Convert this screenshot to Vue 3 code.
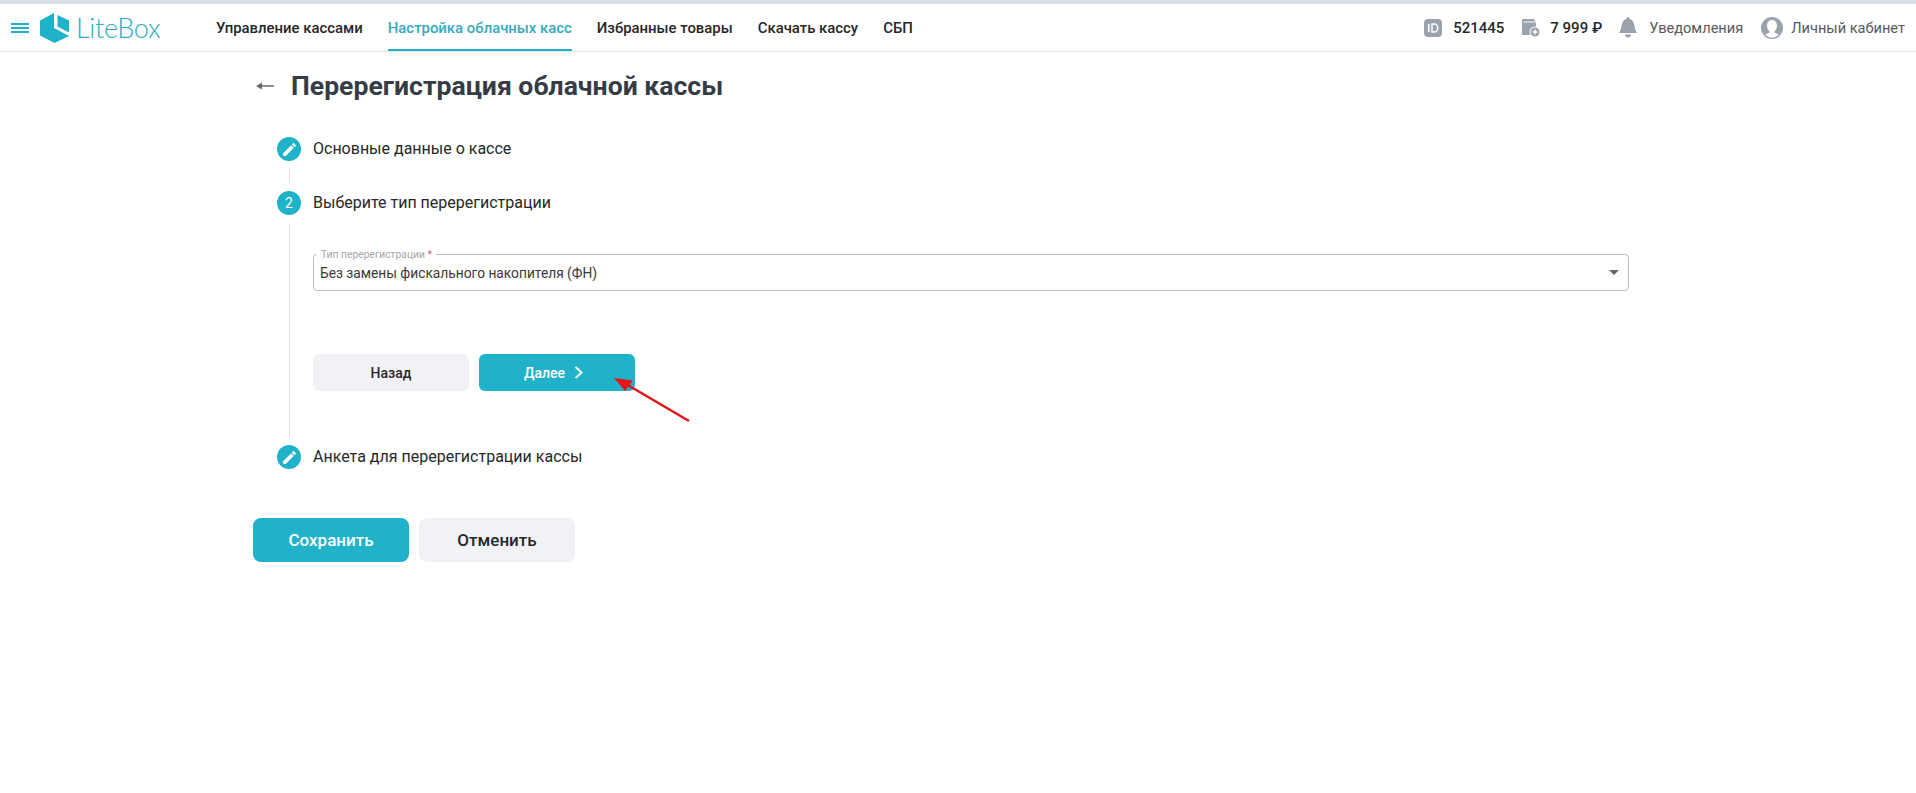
<script setup>
const nav = [
  { label: 'Управление кассами' },
  { label: 'Настройка облачных касс', active: true },
  { label: 'Избранные товары' },
  { label: 'Скачать кассу' },
  { label: 'СБП' },
]
</script>

<template>
  <div class="page">
    <header class="header">
      <button class="burger" aria-label="Меню"><span></span><span></span><span></span></button>
      <div class="logo">
        <svg class="logo-mark" width="29" height="30" viewBox="0 0 29 30">
          <path fill="#20b2c8" d="M14 0 V15 L29 23 L14.500 30 L0 22.500 V7.500 Z"/>
          <path fill="#20b2c8" d="M17.500 2 L29 7.500 V19.500 L17.500 13.500 Z"/>
        </svg>
        <span class="logo-text">LiteBox</span>
      </div>
      <nav class="nav">
        <a v-for="item in nav" :key="item.label" class="nav-item" :class="{ active: item.active }">{{ item.label }}</a>
      </nav>
      <div class="tools">
        <svg class="tool-icon id" width="18" height="18" viewBox="0 0 18 18">
          <rect width="18" height="18" rx="4" fill="#9aa3ad"/>
          <rect x="4" y="5" width="1.600" height="8" fill="#fff"/>
          <path d="M8 5h2.500a3.200 4 0 0 1 0 8H8z" fill="none" stroke="#fff" stroke-width="1.500"/>
        </svg>
        <b class="num id-num">521445</b>
        <svg class="tool-icon wallet" width="19" height="19" viewBox="0 0 19 19">
          <path fill="#9aa3ad" d="M2 1h11l1.500 2.500H2.500v1H15V17H2a1 1 0 0 1-1-1V2a1 1 0 0 1 1-1z"/>
          <circle cx="14" cy="14" r="5.500" fill="#fff"/>
          <circle cx="14" cy="14" r="4.500" fill="#9aa3ad"/>
          <path d="M14 11.500v5M11.500 14h5" stroke="#fff" stroke-width="1.300"/>
        </svg>
        <b class="num money">7 999 ₽</b>
        <svg class="tool-icon bell" width="18" height="22" viewBox="0 0 18 22">
          <path fill="#9aa3ad" d="M9 0c1 0 1.600.8 1.500 1.800C13.500 2.600 15 5.500 15.500 9c.3 2.500 1 4.500 2.500 7H0c1.500-2.500 2.200-4.500 2.500-7C3 5.500 4.500 2.600 7.500 1.800 7.400.8 8 0 9 0zM6 17.500h6a3 3 0 0 1-6 0z"/>
        </svg>
        <span class="link notify">Уведомления</span>
        <svg class="tool-icon avatar" width="22" height="22" viewBox="0 0 22 22">
          <circle cx="11" cy="11" r="11" fill="#9aa3ad"/>
          <path fill="#fff" d="M11 3c3.200 0 5 2.500 5 5.800 0 2.400-1 4.400-2.500 5.500v1.200c1.500.7 3 1.200 4.300 2.100A9 9 0 0 1 4.200 17.600c1.300-.9 2.800-1.400 4.300-2.100v-1.200C7 13.200 6 11.200 6 8.800 6 5.500 7.800 3 11 3z"/>
        </svg>
        <span class="link">Личный кабинет</span>
      </div>
    </header>

    <main class="main">
      <div class="title-row">
        <svg class="back" width="18" height="10" viewBox="0 0 18 10">
          <path d="M18 5H3" stroke="#666" stroke-width="1.500"/>
          <path d="M0 5 6 1.500v7z" fill="#666"/>
        </svg>
        <h1 class="title">Перерегистрация облачной кассы</h1>
      </div>

      <div class="steps">
        <div class="step">
          <span class="badge">
            <svg width="17" height="17" viewBox="0 0 24 24"><path fill="#fff" d="M3 17.250V21h3.750L17.810 9.940l-3.750-3.750L3 17.250zM20.710 7.040a1 1 0 0 0 0-1.410l-2.340-2.340a1 1 0 0 0-1.410 0l-1.830 1.830 3.750 3.750 1.830-1.830z"/></svg>
          </span>
          <span class="step-label">Основные данные о кассе</span>
        </div>
        <div class="connector short"></div>
        <div class="step">
          <span class="badge">2</span>
          <span class="step-label">Выберите тип перерегистрации</span>
        </div>
        <div class="step-body">
          <div class="select">
            <span class="select-legend">Тип перерегистрации <i>*</i></span>
            <span class="select-value">Без замены фискального накопителя (ФН)</span>
            <span class="select-arrow"></span>
          </div>
          <div class="step-actions">
            <button class="btn small ghost">Назад</button>
            <button class="btn small primary">
              Далее
              <svg class="chev" width="10" height="13" viewBox="0 0 10 13"><path d="M1.500 1 7.500 6.500 1.500 12" fill="none" stroke="#fff" stroke-width="1.900"/></svg>
            </button>
            <svg class="annotation" width="90" height="60" viewBox="0 0 90 60">
              <path d="M81 48 18 11" stroke="#e8141c" stroke-width="2.600" fill="none"/>
              <path d="M6 5 25 7.500 17 18z" fill="#e8141c"/>
            </svg>
          </div>
        </div>
        <div class="step">
          <span class="badge">
            <svg width="17" height="17" viewBox="0 0 24 24"><path fill="#fff" d="M3 17.250V21h3.750L17.810 9.940l-3.750-3.750L3 17.250zM20.710 7.040a1 1 0 0 0 0-1.410l-2.340-2.340a1 1 0 0 0-1.410 0l-1.830 1.830 3.750 3.750 1.830-1.830z"/></svg>
          </span>
          <span class="step-label">Анкета для перерегистрации кассы</span>
        </div>
      </div>

      <div class="actions">
        <button class="btn large primary">Сохранить</button>
        <button class="btn large ghost">Отменить</button>
      </div>
    </main>
  </div>
</template>

<style>
html, body { margin: 0; background: #fff; }
</style>

<style scoped>
.page {
  min-height: 793px;
  background: #fff;
  border-top: 4px solid #d6e0e8;
  box-sizing: border-box;
  font-family: Roboto, "Liberation Sans", sans-serif;
  color: #25282b;
}
.header {
  height: 48px;
  box-sizing: border-box;
  display: flex;
  align-items: center;
  border-bottom: 1px solid #e4e6e8;
  padding-left: 11px;
  padding-right: 11px;
}
.burger {
  display: flex;
  flex-direction: column;
  gap: 2px;
  width: 18px;
  padding: 0;
  border: 0;
  background: none;
  margin-right: 11px;
}
.burger span { display: block; height: 2px; background: #20b2c8; }
.logo { display: flex; align-items: center; width: 176px; flex: none; }
.logo-mark { flex: none; }
.logo-text {
  font-family: Lato, sans-serif;
  font-weight: 300;
  font-size: 27px;
  color: #2eacc2;
  margin-left: 7px;
  letter-spacing: -0.3px;
}
.nav { display: flex; gap: 25px; height: 100%; }
.nav-item {
  display: flex;
  align-items: center;
  height: 100%;
  box-sizing: border-box;
  font-size: 14.900px;
  font-weight: 500;
  color: #25282b;
  border-bottom: 2px solid transparent;
  margin-bottom: -1px;
  padding-top: 2px;
}
.nav-item.active { color: #39a9bd; border-bottom-color: #20b2c8; }
.tools { margin-left: auto; display: flex; align-items: center; }
.tool-icon { flex: none; }
.num { font-size: 15px; font-weight: 500; color: #25282b; }
.id-num { margin-left: 11px; margin-right: 17px; }
.money { margin-left: 10px; margin-right: 17px; }
.link { font-size: 14.600px; font-weight: 400; color: #55595d; }
.bell { margin-right: 12px; }
.notify { margin-right: 18px; }
.avatar { margin-right: 8px; }

.main { padding: 0 0 0 253px; }
.title-row { display: flex; align-items: center; height: 66px; padding-top: 1px; box-sizing: border-box; }
.back { flex: none; margin: 0 17px 0 3px; }
.title { margin: 0; font-size: 26.600px; font-weight: 700; color: #353c46; }

.steps { margin-top: 19px; padding-left: 24px; }
.step { display: flex; align-items: center; height: 24px; }
.badge {
  width: 24px;
  height: 24px;
  flex: none;
  border-radius: 50%;
  background: #20b2c8;
  color: #fff;
  font-size: 14px;
  display: flex;
  align-items: center;
  justify-content: center;
}
.step-label { margin-left: 12px; padding-bottom: 2px; font-size: 16px; color: #25282b; }
.connector.short {
  height: 15px;
  margin: 7px 0 8px 12px;
  border-left: 1px solid #ddd;
}
.step-body {
  margin: 8px 0 8px 12px;
  padding: 31px 0 0 23px;
  height: 214px;
  box-sizing: border-box;
  border-left: 1px solid #ddd;
  width: 1340px;
}
.select {
  position: relative;
  height: 37px;
  width: 1316px;
  box-sizing: border-box;
  border: 1px solid #bdbdbd;
  border-radius: 4px;
  display: flex;
  align-items: center;
  padding: 0 7px 0 6px;
}
.select-legend {
  position: absolute;
  left: 3px;
  top: -6px;
  padding: 0 4px;
  background: #fff;
  font-size: 10.300px;
  line-height: 12px;
  color: #a5a5a5;
}
.select-legend i { font-style: normal; color: #e05a5a; }
.select-value { font-size: 13.750px; color: #3a3a3a; }
.select-arrow {
  position: absolute;
  right: 9px;
  top: 15px;
  width: 0;
  height: 0;
  border-left: 5px solid transparent;
  border-right: 5px solid transparent;
  border-top: 5px solid #666;
}
.step-actions { position: relative; display: flex; gap: 10px; margin-top: 63px; }
.annotation { position: absolute; left: 295px; top: 19px; pointer-events: none; }
.btn {
  width: 156px;
  border: 0;
  font-family: inherit;
  display: flex;
  align-items: center;
  justify-content: center;
}
.btn.small { height: 37px; border-radius: 6px; font-size: 14px; font-weight: 500; }
.btn.large { height: 44px; border-radius: 8px; font-size: 17px; font-weight: 500; }
.primary { background: #20b2c8; color: #fff; }
.ghost { background: #f1f2f6; color: #25282b; }
.chev { margin-left: 9px; margin-right: 6px; }
.actions { display: flex; gap: 10px; margin-top: 49px; }
</style>
